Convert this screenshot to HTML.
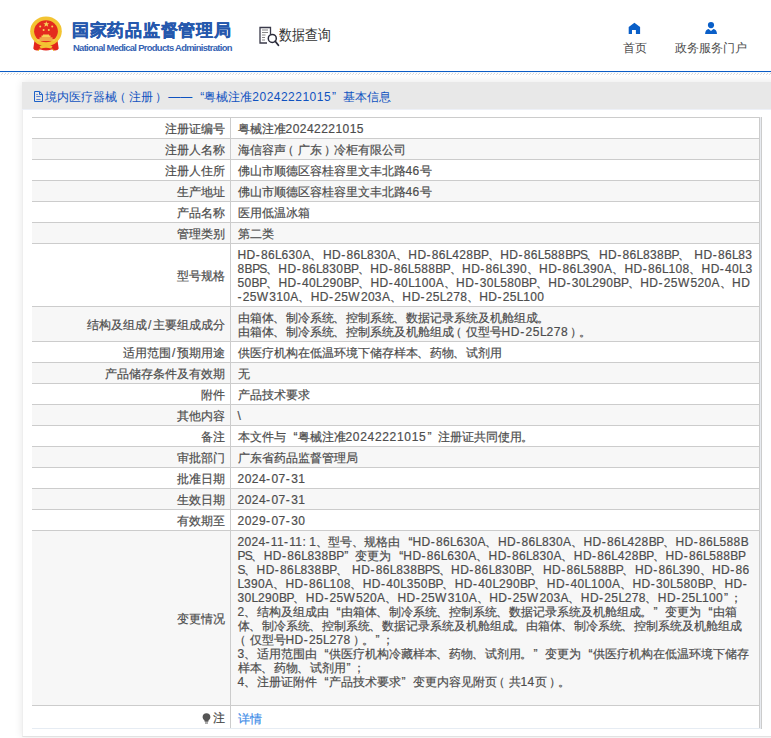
<!DOCTYPE html>
<html><head><meta charset="utf-8">
<style>
*{margin:0;padding:0;box-sizing:border-box}
html,body{width:771px;height:738px;overflow:hidden;background:#fff}
body{position:relative;font-family:"Liberation Sans",sans-serif;font-size:12px;color:#4d4d4d}
.abs{position:absolute}
#topline{left:0;top:71px;width:771px;height:1px;background:#0b5cc5}
#hatch{left:0;top:72px;width:771px;height:4px;background:repeating-linear-gradient(135deg,#fff 0,#fff 1.4px,#d8d8d8 1.4px,#d8d8d8 2.2px,#fff 2.2px,#fff 3px)}
#title{left:72px;top:19px;font-size:17px;letter-spacing:0.72px;font-weight:bold;color:#2558ad;-webkit-text-stroke:0.35px #2558ad;white-space:nowrap;line-height:24px}
#sub{left:73px;top:42px;font-size:9.4px;font-weight:bold;letter-spacing:-0.67px;color:#3462b2;white-space:nowrap;line-height:12px}
#sq{left:279px;top:24px;font-size:13px;color:#333;line-height:20px;white-space:nowrap;transform:scaleY(1.16);transform-origin:0 0}
.nav{top:41px;font-size:12px;color:#4a4a4a;line-height:14px;white-space:nowrap}
#box{left:22px;top:82px;width:760px;height:655px;background:#fff;box-shadow:0 0 8px rgba(0,0,0,.10);border-bottom:1px solid #e2e2e2;border-left:1px solid #eee}
#hbar{left:22px;top:82px;width:749px;height:27px;background:#e8e8e8;border-bottom:1px solid #edf0f7;height:28px}
#htext{left:45px;top:90px;line-height:14px;color:#0f52c0;white-space:nowrap}
.row{position:absolute;left:32px;width:727px;border-top:1px solid #ccc;-webkit-text-stroke:0.2px currentColor}
.row .l{position:absolute;left:0;top:0;bottom:0;width:198px;display:flex;align-items:center;justify-content:flex-end;padding:2px 5.5px 0 0;line-height:14px;white-space:nowrap}
.row .r{position:absolute;left:198px;top:0;bottom:0;right:0;border-left:1px solid #ccc;padding:4px 0 0 6.5px;line-height:14px;white-space:nowrap}
.ln{height:14px}
.ql,.qr{display:inline-block;width:12px}
.ql{text-align:right}
.qr{text-align:left;padding-left:1px}
.pl,.pr,.pd,.ps,.pc{position:relative}
.pl{left:-3.5px}.pr{left:2px}.pd{left:-1px}.ps{left:-5px}.pc{left:-0.5px}
.g{background:#f7f7f7}
#rb1{left:759px;top:117px;width:1px;height:612px;background:#ccc}
#rb2{left:760px;top:117px;width:1px;height:612px;background:#e8ebf0}
#rb3{left:761px;top:117px;width:1px;height:612px;background:#ccc}
#bb{left:32px;top:728px;width:729px;height:1px;background:#e6ecf3}
</style></head><body>
<div id="topline" class="abs"></div>
<svg class="abs" style="left:0;top:72px" width="771" height="4"><defs><pattern id="hp" width="3" height="4" patternUnits="userSpaceOnUse"><rect x="2" y="1" width="1" height="1" fill="#d6d6d6"/><rect x="1" y="2" width="1" height="1" fill="#dedede"/><rect x="0" y="0" width="3" height="1" fill="#f4f8fc"/></pattern></defs><rect width="771" height="4" fill="url(#hp)"/></svg>

<!-- emblem -->
<svg class="abs" style="left:28px;top:14px" width="36" height="40" viewBox="28 14 36 40">
  <path d="M34.5 40.5 L33.3 48.5 Q34 50.8 37.5 50.6 L40.5 49.5 Q46 51.5 51.5 49.5 L54.5 50.6 Q58 50.8 58.7 48.5 L57.5 40.5 Z" fill="#e3261b"/>
  <ellipse cx="46" cy="31.3" rx="15.8" ry="14.8" fill="#f3c432"/>
  <ellipse cx="46" cy="31.2" rx="11.9" ry="11" fill="#e42a1e"/>
  <path d="M37.2 39.2 H54.8 V40.8 H37.2Z M39.5 37.6 H52.5 V38.8 H39.5Z M41.5 35.6 H50.5 V37.3 H41.5Z M43 34.6 H49 V35.6 H43Z" fill="#f6d257"/>
  <path d="M39.5 46.5 Q42 44.2 46 45 Q50 44.2 52.5 46.5 L51 48.5 Q46 47.2 41 48.5Z" fill="#f3c432"/>
  <path d="M40 48.5 L38 51 M52 48.5 L54 51" stroke="#f3c432" stroke-width="1"/>
  <polygon points="46.3,21.2 47.1,23.3 49.3,23.3 47.6,24.6 48.2,26.7 46.3,25.4 44.4,26.7 45,24.6 43.3,23.3 45.5,23.3" fill="#f6d257"/>
  <circle cx="40.2" cy="26.5" r="1" fill="#f6d257"/>
  <circle cx="52.2" cy="26.5" r="1" fill="#f6d257"/>
  <circle cx="43.6" cy="30" r="1" fill="#f6d257"/>
  <circle cx="48.8" cy="30" r="1" fill="#f6d257"/>
</svg>
<div id="title" class="abs">国家药品监督管理局</div>
<div id="sub" class="abs">National Medical Products Administration</div>

<!-- search icon -->
<svg class="abs" style="left:258px;top:25px" width="22" height="22" viewBox="258 25 22 22">
  <path d="M270.5 34 V27.5 H260 V43 H267" fill="none" stroke="#3a3a4a" stroke-width="1.3"/>
  <path d="M262 30 H268 M262 32.5 H268 M262 35 H265.5 M262 37.5 H265 M262 40 H265" stroke="#888" stroke-width="1"/>
  <circle cx="272.3" cy="38.4" r="4" fill="#fff" stroke="#2a2a3a" stroke-width="1.5"/>
  <path d="M275.2 41.3 L278.4 45.2" stroke="#2a2a3a" stroke-width="1.8" stroke-linecap="round"/>
</svg>
<div id="sq" class="abs">数据查询</div>

<!-- nav -->
<svg class="abs" style="left:627px;top:22px" width="15" height="13" viewBox="627 22 15 13">
  <path d="M628.7 27.1 L634.4 22.8 L640.1 27.1 V34 H635.9 V29.9 H632 V34 H628.7 Z" fill="#0a5fc8"/>
</svg>
<div class="abs nav" style="left:623px">首页</div>
<svg class="abs" style="left:704px;top:21px" width="15" height="14" viewBox="704 21 15 14">
  <circle cx="711" cy="25.1" r="3.1" fill="#0a5fc8"/>
  <path d="M705.1 34 Q705.3 29.4 708.6 28.9 L711 30.9 L713.4 28.9 Q716.8 29.4 717 34 Z" fill="#0a5fc8"/>
</svg>
<div class="abs nav" style="left:675px">政务服务门户</div>

<!-- container -->
<div id="box" class="abs"></div>
<div id="hbar" class="abs"></div>
<svg class="abs" style="left:33px;top:90px" width="11" height="13" viewBox="33 90 11 13">
  <path d="M34.5 91.5 H39.7 L42.5 94.3 V101.5 H34.5 Z" fill="none" stroke="#1d62c9" stroke-width="1"/>
  <path d="M39.5 91.8 V94.5 H42.2" fill="none" stroke="#1d62c9" stroke-width="1"/>
  <path d="M36.3 94.5 H37.8 M36.3 96.5 H40.5 M36.3 99.5 H40.5" stroke="#5a7fcf" stroke-width="1"/>
</svg>
<div id="htext" class="abs">境内医疗器械<span class="pl">（</span>注册<span class="pr">）</span> ——<span class="ql">“</span>粤械注准<span style="letter-spacing:0.48px">20242221015</span><span class="qr">”</span>基本信息</div>

<div id="rows">
<div class="row" style="top:117px;height:21px"><div class="l">注册证编号</div><div class="r"><div class="ln">粤械注准<span style="letter-spacing:0.457px">20242221015</span></div></div></div>
<div class="row g" style="top:138px;height:21px"><div class="l">注册人名称</div><div class="r"><div class="ln">海信容声<span class="pl">（</span>广东<span class="pr">）</span>冷柜有限公司</div></div></div>
<div class="row" style="top:159px;height:21px"><div class="l">注册人住所</div><div class="r"><div class="ln">佛山市顺德区容桂容里文丰北路<span style="letter-spacing:0.33px">46</span>号</div></div></div>
<div class="row g" style="top:180px;height:21px"><div class="l">生产地址</div><div class="r"><div class="ln">佛山市顺德区容桂容里文丰北路<span style="letter-spacing:0.33px">46</span>号</div></div></div>
<div class="row" style="top:201px;height:21px"><div class="l">产品名称</div><div class="r"><div class="ln">医用低温冰箱</div></div></div>
<div class="row g" style="top:222px;height:21px"><div class="l">管理类别</div><div class="r"><div class="ln">第二类</div></div></div>
<div class="row" style="top:243px;height:63px"><div class="l">型号规格</div><div class="r"><div class="ln"><span style="letter-spacing:0.426px">H</span><span style="letter-spacing:0.526px">D</span><span style="letter-spacing:1.246px">-</span><span style="letter-spacing:0.326px">86</span><span style="letter-spacing:-0.224px">L</span><span style="letter-spacing:0.326px">630</span><span style="letter-spacing:0.396px">A</span><span class="pc">、</span><span style="letter-spacing:0.426px">H</span><span style="letter-spacing:0.526px">D</span><span style="letter-spacing:1.246px">-</span><span style="letter-spacing:0.326px">86</span><span style="letter-spacing:-0.224px">L</span><span style="letter-spacing:0.326px">830</span><span style="letter-spacing:0.396px">A</span><span class="pc">、</span><span style="letter-spacing:0.426px">H</span><span style="letter-spacing:0.526px">D</span><span style="letter-spacing:1.246px">-</span><span style="letter-spacing:0.326px">86</span><span style="letter-spacing:-0.224px">L</span><span style="letter-spacing:0.326px">428</span><span style="letter-spacing:-0.404px">B</span><span style="letter-spacing:-0.804px">P</span><span class="pc">、</span><span style="letter-spacing:0.426px">H</span><span style="letter-spacing:0.526px">D</span><span style="letter-spacing:1.246px">-</span><span style="letter-spacing:0.326px">86</span><span style="letter-spacing:-0.224px">L</span><span style="letter-spacing:0.326px">588</span><span style="letter-spacing:-0.404px">B</span><span style="letter-spacing:-0.804px">P</span><span style="letter-spacing:-1.004px">S</span><span class="pc">、</span><span style="letter-spacing:0.426px">H</span><span style="letter-spacing:0.526px">D</span><span style="letter-spacing:1.246px">-</span><span style="letter-spacing:0.326px">86</span><span style="letter-spacing:-0.224px">L</span><span style="letter-spacing:0.326px">838</span><span style="letter-spacing:-0.404px">B</span><span style="letter-spacing:-0.804px">P</span><span class="pc">、</span><span style="letter-spacing:0.266px"> </span><span style="letter-spacing:0.426px">H</span><span style="letter-spacing:0.526px">D</span><span style="letter-spacing:1.246px">-</span><span style="letter-spacing:0.326px">86</span><span style="letter-spacing:-0.224px">L</span><span style="letter-spacing:0.326px">83</span></div><div class="ln"><span style="letter-spacing:0.327px">8</span><span style="letter-spacing:-0.403px">B</span><span style="letter-spacing:-0.803px">P</span><span style="letter-spacing:-1.003px">S</span><span class="pc">、</span><span style="letter-spacing:0.427px">H</span><span style="letter-spacing:0.527px">D</span><span style="letter-spacing:1.247px">-</span><span style="letter-spacing:0.327px">86</span><span style="letter-spacing:-0.223px">L</span><span style="letter-spacing:0.327px">830</span><span style="letter-spacing:-0.403px">B</span><span style="letter-spacing:-0.803px">P</span><span class="pc">、</span><span style="letter-spacing:0.427px">H</span><span style="letter-spacing:0.527px">D</span><span style="letter-spacing:1.247px">-</span><span style="letter-spacing:0.327px">86</span><span style="letter-spacing:-0.223px">L</span><span style="letter-spacing:0.327px">588</span><span style="letter-spacing:-0.403px">B</span><span style="letter-spacing:-0.803px">P</span><span class="pc">、</span><span style="letter-spacing:0.427px">H</span><span style="letter-spacing:0.527px">D</span><span style="letter-spacing:1.247px">-</span><span style="letter-spacing:0.327px">86</span><span style="letter-spacing:-0.223px">L</span><span style="letter-spacing:0.327px">390</span><span class="pc">、</span><span style="letter-spacing:0.427px">H</span><span style="letter-spacing:0.527px">D</span><span style="letter-spacing:1.247px">-</span><span style="letter-spacing:0.327px">86</span><span style="letter-spacing:-0.223px">L</span><span style="letter-spacing:0.327px">390</span><span style="letter-spacing:0.397px">A</span><span class="pc">、</span><span style="letter-spacing:0.427px">H</span><span style="letter-spacing:0.527px">D</span><span style="letter-spacing:1.247px">-</span><span style="letter-spacing:0.327px">86</span><span style="letter-spacing:-0.223px">L</span><span style="letter-spacing:0.327px">108</span><span class="pc">、</span><span style="letter-spacing:0.427px">H</span><span style="letter-spacing:0.527px">D</span><span style="letter-spacing:1.247px">-</span><span style="letter-spacing:0.327px">40</span><span style="letter-spacing:-0.223px">L</span><span style="letter-spacing:0.327px">3</span></div><div class="ln"><span style="letter-spacing:0.346px">50</span><span style="letter-spacing:-0.384px">B</span><span style="letter-spacing:-0.784px">P</span><span class="pc">、</span><span style="letter-spacing:0.446px">H</span><span style="letter-spacing:0.546px">D</span><span style="letter-spacing:1.266px">-</span><span style="letter-spacing:0.346px">40</span><span style="letter-spacing:-0.204px">L</span><span style="letter-spacing:0.346px">290</span><span style="letter-spacing:-0.384px">B</span><span style="letter-spacing:-0.784px">P</span><span class="pc">、</span><span style="letter-spacing:0.446px">H</span><span style="letter-spacing:0.546px">D</span><span style="letter-spacing:1.266px">-</span><span style="letter-spacing:0.346px">40</span><span style="letter-spacing:-0.204px">L</span><span style="letter-spacing:0.346px">100</span><span style="letter-spacing:0.416px">A</span><span class="pc">、</span><span style="letter-spacing:0.446px">H</span><span style="letter-spacing:0.546px">D</span><span style="letter-spacing:1.266px">-</span><span style="letter-spacing:0.346px">30</span><span style="letter-spacing:-0.204px">L</span><span style="letter-spacing:0.346px">580</span><span style="letter-spacing:-0.384px">B</span><span style="letter-spacing:-0.784px">P</span><span class="pc">、</span><span style="letter-spacing:0.446px">H</span><span style="letter-spacing:0.546px">D</span><span style="letter-spacing:1.266px">-</span><span style="letter-spacing:0.346px">30</span><span style="letter-spacing:-0.204px">L</span><span style="letter-spacing:0.346px">290</span><span style="letter-spacing:-0.384px">B</span><span style="letter-spacing:-0.784px">P</span><span class="pc">、</span><span style="letter-spacing:0.446px">H</span><span style="letter-spacing:0.546px">D</span><span style="letter-spacing:1.266px">-</span><span style="letter-spacing:0.346px">25</span><span style="letter-spacing:1.336px">W</span><span style="letter-spacing:0.346px">520</span><span style="letter-spacing:0.416px">A</span><span class="pc">、</span><span style="letter-spacing:0.446px">H</span><span style="letter-spacing:0.546px">D</span></div><div class="ln"><span style="letter-spacing:1.238px">-</span><span style="letter-spacing:0.318px">25</span><span style="letter-spacing:1.308px">W</span><span style="letter-spacing:0.318px">310</span><span style="letter-spacing:0.388px">A</span><span class="pc">、</span><span style="letter-spacing:0.418px">H</span><span style="letter-spacing:0.518px">D</span><span style="letter-spacing:1.238px">-</span><span style="letter-spacing:0.318px">25</span><span style="letter-spacing:1.308px">W</span><span style="letter-spacing:0.318px">203</span><span style="letter-spacing:0.388px">A</span><span class="pc">、</span><span style="letter-spacing:0.418px">H</span><span style="letter-spacing:0.518px">D</span><span style="letter-spacing:1.238px">-</span><span style="letter-spacing:0.318px">25</span><span style="letter-spacing:-0.232px">L</span><span style="letter-spacing:0.318px">278</span><span class="pc">、</span><span style="letter-spacing:0.418px">H</span><span style="letter-spacing:0.518px">D</span><span style="letter-spacing:1.238px">-</span><span style="letter-spacing:0.318px">25</span><span style="letter-spacing:-0.232px">L</span><span style="letter-spacing:0.318px">100</span></div></div></div>
<div class="row g" style="top:306px;height:35px"><div class="l">结构及组成<span style="margin:0 1.1px">/</span>主要组成成分</div><div class="r"><div class="ln">由箱体<span class="pc">、</span>制冷系统<span class="pc">、</span>控制系统<span class="pc">、</span>数据记录系统及机舱组成<span class="pd">。</span></div><div class="ln">由箱体<span class="pc">、</span>制冷系统<span class="pc">、</span>控制系统及机舱组成<span class="pl">（</span>仅型号<span style="letter-spacing:0.608px">H</span><span style="letter-spacing:0.708px">D</span><span style="letter-spacing:1.428px">-</span><span style="letter-spacing:0.508px">25</span><span style="letter-spacing:-0.042px">L</span><span style="letter-spacing:0.508px">278</span><span class="pr">）</span><span class="pd">。</span></div></div></div>
<div class="row" style="top:341px;height:21px"><div class="l">适用范围<span style="margin:0 1.1px">/</span>预期用途</div><div class="r"><div class="ln">供医疗机构在低温环境下储存样本<span class="pc">、</span>药物<span class="pc">、</span>试剂用</div></div></div>
<div class="row g" style="top:362px;height:21px"><div class="l">产品储存条件及有效期</div><div class="r"><div class="ln">无</div></div></div>
<div class="row" style="top:383px;height:21px"><div class="l">附件</div><div class="r"><div class="ln">产品技术要求</div></div></div>
<div class="row g" style="top:404px;height:21px"><div class="l">其他内容</div><div class="r"><div class="ln"><span style="letter-spacing:0.2px">&#92;</span></div></div></div>
<div class="row" style="top:425px;height:21px"><div class="l">备注</div><div class="r"><div class="ln">本文件与<span class="ql">“</span>粤械注准<span style="letter-spacing:0.679px">20242221015</span><span class="qr">”</span>注册证共同使用<span class="pd">。</span></div></div></div>
<div class="row g" style="top:446px;height:21px"><div class="l">审批部门</div><div class="r"><div class="ln">广东省药品监督管理局</div></div></div>
<div class="row" style="top:467px;height:21px"><div class="l">批准日期</div><div class="r"><div class="ln"><span style="letter-spacing:0.47px">2024</span><span style="letter-spacing:1.39px">-</span><span style="letter-spacing:0.47px">07</span><span style="letter-spacing:1.39px">-</span><span style="letter-spacing:0.47px">31</span></div></div></div>
<div class="row g" style="top:488px;height:21px"><div class="l">生效日期</div><div class="r"><div class="ln"><span style="letter-spacing:0.47px">2024</span><span style="letter-spacing:1.39px">-</span><span style="letter-spacing:0.47px">07</span><span style="letter-spacing:1.39px">-</span><span style="letter-spacing:0.47px">31</span></div></div></div>
<div class="row" style="top:509px;height:21px"><div class="l">有效期至</div><div class="r"><div class="ln"><span style="letter-spacing:0.47px">2029</span><span style="letter-spacing:1.39px">-</span><span style="letter-spacing:0.47px">07</span><span style="letter-spacing:1.39px">-</span><span style="letter-spacing:0.47px">30</span></div></div></div>
<div class="row g" style="top:530px;height:175px"><div class="l">变更情况</div><div class="r"><div class="ln"><span style="letter-spacing:0.341px">2024</span><span style="letter-spacing:1.261px">-</span><span style="letter-spacing:0.341px">11</span><span style="letter-spacing:1.261px">-</span><span style="letter-spacing:0.341px">11</span><span style="letter-spacing:0.011px">:</span><span style="letter-spacing:0.281px"> </span><span style="letter-spacing:0.341px">1</span><span class="pc">、</span>型号<span class="pc">、</span>规格由<span class="ql">“</span><span style="letter-spacing:0.441px">H</span><span style="letter-spacing:0.541px">D</span><span style="letter-spacing:1.261px">-</span><span style="letter-spacing:0.341px">86</span><span style="letter-spacing:-0.209px">L</span><span style="letter-spacing:0.341px">630</span><span style="letter-spacing:0.411px">A</span><span class="pc">、</span><span style="letter-spacing:0.441px">H</span><span style="letter-spacing:0.541px">D</span><span style="letter-spacing:1.261px">-</span><span style="letter-spacing:0.341px">86</span><span style="letter-spacing:-0.209px">L</span><span style="letter-spacing:0.341px">830</span><span style="letter-spacing:0.411px">A</span><span class="pc">、</span><span style="letter-spacing:0.441px">H</span><span style="letter-spacing:0.541px">D</span><span style="letter-spacing:1.261px">-</span><span style="letter-spacing:0.341px">86</span><span style="letter-spacing:-0.209px">L</span><span style="letter-spacing:0.341px">428</span><span style="letter-spacing:-0.389px">B</span><span style="letter-spacing:-0.789px">P</span><span class="pc">、</span><span style="letter-spacing:0.441px">H</span><span style="letter-spacing:0.541px">D</span><span style="letter-spacing:1.261px">-</span><span style="letter-spacing:0.341px">86</span><span style="letter-spacing:-0.209px">L</span><span style="letter-spacing:0.341px">588</span><span style="letter-spacing:-0.389px">B</span></div><div class="ln"><span style="letter-spacing:-0.822px">P</span><span style="letter-spacing:-1.022px">S</span><span class="pc">、</span><span style="letter-spacing:0.408px">H</span><span style="letter-spacing:0.508px">D</span><span style="letter-spacing:1.228px">-</span><span style="letter-spacing:0.308px">86</span><span style="letter-spacing:-0.242px">L</span><span style="letter-spacing:0.308px">838</span><span style="letter-spacing:-0.422px">B</span><span style="letter-spacing:-0.822px">P</span><span class="qr">”</span>变更为<span class="ql">“</span><span style="letter-spacing:0.408px">H</span><span style="letter-spacing:0.508px">D</span><span style="letter-spacing:1.228px">-</span><span style="letter-spacing:0.308px">86</span><span style="letter-spacing:-0.242px">L</span><span style="letter-spacing:0.308px">630</span><span style="letter-spacing:0.378px">A</span><span class="pc">、</span><span style="letter-spacing:0.408px">H</span><span style="letter-spacing:0.508px">D</span><span style="letter-spacing:1.228px">-</span><span style="letter-spacing:0.308px">86</span><span style="letter-spacing:-0.242px">L</span><span style="letter-spacing:0.308px">830</span><span style="letter-spacing:0.378px">A</span><span class="pc">、</span><span style="letter-spacing:0.408px">H</span><span style="letter-spacing:0.508px">D</span><span style="letter-spacing:1.228px">-</span><span style="letter-spacing:0.308px">86</span><span style="letter-spacing:-0.242px">L</span><span style="letter-spacing:0.308px">428</span><span style="letter-spacing:-0.422px">B</span><span style="letter-spacing:-0.822px">P</span><span class="pc">、</span><span style="letter-spacing:0.408px">H</span><span style="letter-spacing:0.508px">D</span><span style="letter-spacing:1.228px">-</span><span style="letter-spacing:0.308px">86</span><span style="letter-spacing:-0.242px">L</span><span style="letter-spacing:0.308px">588</span><span style="letter-spacing:-0.422px">B</span><span style="letter-spacing:-0.822px">P</span></div><div class="ln"><span style="letter-spacing:-0.996px">S</span><span class="pc">、</span><span style="letter-spacing:0.434px">H</span><span style="letter-spacing:0.534px">D</span><span style="letter-spacing:1.254px">-</span><span style="letter-spacing:0.334px">86</span><span style="letter-spacing:-0.216px">L</span><span style="letter-spacing:0.334px">838</span><span style="letter-spacing:-0.396px">B</span><span style="letter-spacing:-0.796px">P</span><span class="pc">、</span><span style="letter-spacing:0.274px"> </span><span style="letter-spacing:0.434px">H</span><span style="letter-spacing:0.534px">D</span><span style="letter-spacing:1.254px">-</span><span style="letter-spacing:0.334px">86</span><span style="letter-spacing:-0.216px">L</span><span style="letter-spacing:0.334px">838</span><span style="letter-spacing:-0.396px">B</span><span style="letter-spacing:-0.796px">P</span><span style="letter-spacing:-0.996px">S</span><span class="pc">、</span><span style="letter-spacing:0.434px">H</span><span style="letter-spacing:0.534px">D</span><span style="letter-spacing:1.254px">-</span><span style="letter-spacing:0.334px">86</span><span style="letter-spacing:-0.216px">L</span><span style="letter-spacing:0.334px">830</span><span style="letter-spacing:-0.396px">B</span><span style="letter-spacing:-0.796px">P</span><span class="pc">、</span><span style="letter-spacing:0.434px">H</span><span style="letter-spacing:0.534px">D</span><span style="letter-spacing:1.254px">-</span><span style="letter-spacing:0.334px">86</span><span style="letter-spacing:-0.216px">L</span><span style="letter-spacing:0.334px">588</span><span style="letter-spacing:-0.396px">B</span><span style="letter-spacing:-0.796px">P</span><span class="pc">、</span><span style="letter-spacing:0.434px">H</span><span style="letter-spacing:0.534px">D</span><span style="letter-spacing:1.254px">-</span><span style="letter-spacing:0.334px">86</span><span style="letter-spacing:-0.216px">L</span><span style="letter-spacing:0.334px">390</span><span class="pc">、</span><span style="letter-spacing:0.434px">H</span><span style="letter-spacing:0.534px">D</span><span style="letter-spacing:1.254px">-</span><span style="letter-spacing:0.334px">86</span></div><div class="ln"><span style="letter-spacing:-0.203px">L</span><span style="letter-spacing:0.347px">390</span><span style="letter-spacing:0.417px">A</span><span class="pc">、</span><span style="letter-spacing:0.447px">H</span><span style="letter-spacing:0.547px">D</span><span style="letter-spacing:1.267px">-</span><span style="letter-spacing:0.347px">86</span><span style="letter-spacing:-0.203px">L</span><span style="letter-spacing:0.347px">108</span><span class="pc">、</span><span style="letter-spacing:0.447px">H</span><span style="letter-spacing:0.547px">D</span><span style="letter-spacing:1.267px">-</span><span style="letter-spacing:0.347px">40</span><span style="letter-spacing:-0.203px">L</span><span style="letter-spacing:0.347px">350</span><span style="letter-spacing:-0.383px">B</span><span style="letter-spacing:-0.783px">P</span><span class="pc">、</span><span style="letter-spacing:0.447px">H</span><span style="letter-spacing:0.547px">D</span><span style="letter-spacing:1.267px">-</span><span style="letter-spacing:0.347px">40</span><span style="letter-spacing:-0.203px">L</span><span style="letter-spacing:0.347px">290</span><span style="letter-spacing:-0.383px">B</span><span style="letter-spacing:-0.783px">P</span><span class="pc">、</span><span style="letter-spacing:0.447px">H</span><span style="letter-spacing:0.547px">D</span><span style="letter-spacing:1.267px">-</span><span style="letter-spacing:0.347px">40</span><span style="letter-spacing:-0.203px">L</span><span style="letter-spacing:0.347px">100</span><span style="letter-spacing:0.417px">A</span><span class="pc">、</span><span style="letter-spacing:0.447px">H</span><span style="letter-spacing:0.547px">D</span><span style="letter-spacing:1.267px">-</span><span style="letter-spacing:0.347px">30</span><span style="letter-spacing:-0.203px">L</span><span style="letter-spacing:0.347px">580</span><span style="letter-spacing:-0.383px">B</span><span style="letter-spacing:-0.783px">P</span><span class="pc">、</span><span style="letter-spacing:0.447px">H</span><span style="letter-spacing:0.547px">D</span><span style="letter-spacing:1.267px">-</span></div><div class="ln"><span style="letter-spacing:0.33px">30</span><span style="letter-spacing:-0.22px">L</span><span style="letter-spacing:0.33px">290</span><span style="letter-spacing:-0.4px">B</span><span style="letter-spacing:-0.8px">P</span><span class="pc">、</span><span style="letter-spacing:0.43px">H</span><span style="letter-spacing:0.53px">D</span><span style="letter-spacing:1.25px">-</span><span style="letter-spacing:0.33px">25</span><span style="letter-spacing:1.32px">W</span><span style="letter-spacing:0.33px">520</span><span style="letter-spacing:0.4px">A</span><span class="pc">、</span><span style="letter-spacing:0.43px">H</span><span style="letter-spacing:0.53px">D</span><span style="letter-spacing:1.25px">-</span><span style="letter-spacing:0.33px">25</span><span style="letter-spacing:1.32px">W</span><span style="letter-spacing:0.33px">310</span><span style="letter-spacing:0.4px">A</span><span class="pc">、</span><span style="letter-spacing:0.43px">H</span><span style="letter-spacing:0.53px">D</span><span style="letter-spacing:1.25px">-</span><span style="letter-spacing:0.33px">25</span><span style="letter-spacing:1.32px">W</span><span style="letter-spacing:0.33px">203</span><span style="letter-spacing:0.4px">A</span><span class="pc">、</span><span style="letter-spacing:0.43px">H</span><span style="letter-spacing:0.53px">D</span><span style="letter-spacing:1.25px">-</span><span style="letter-spacing:0.33px">25</span><span style="letter-spacing:-0.22px">L</span><span style="letter-spacing:0.33px">278</span><span class="pc">、</span><span style="letter-spacing:0.43px">H</span><span style="letter-spacing:0.53px">D</span><span style="letter-spacing:1.25px">-</span><span style="letter-spacing:0.33px">25</span><span style="letter-spacing:-0.22px">L</span><span style="letter-spacing:0.33px">100</span><span class="qr">”</span><span class="ps">；</span></div><div class="ln"><span style="letter-spacing:0.33px">2</span><span class="pc">、</span>结构及组成由<span class="ql">“</span>由箱体<span class="pc">、</span>制冷系统<span class="pc">、</span>控制系统<span class="pc">、</span>数据记录系统及机舱组成<span class="pd">。</span><span class="qr">”</span>变更为<span class="ql">“</span>由箱</div><div class="ln">体<span class="pc">、</span>制冷系统<span class="pc">、</span>控制系统<span class="pc">、</span>数据记录系统及机舱组成<span class="pd">。</span>由箱体<span class="pc">、</span>制冷系统<span class="pc">、</span>控制系统及机舱组成</div><div class="ln"><span class="pl">（</span>仅型号<span style="letter-spacing:0.43px">H</span><span style="letter-spacing:0.53px">D</span><span style="letter-spacing:1.25px">-</span><span style="letter-spacing:0.33px">25</span><span style="letter-spacing:-0.22px">L</span><span style="letter-spacing:0.33px">278</span><span class="pr">）</span><span class="pd">。</span><span class="qr">”</span><span class="ps">；</span></div><div class="ln"><span style="letter-spacing:0.33px">3</span><span class="pc">、</span>适用范围由<span class="ql">“</span>供医疗机构冷藏样本<span class="pc">、</span>药物<span class="pc">、</span>试剂用<span class="pd">。</span><span class="qr">”</span>变更为<span class="ql">“</span>供医疗机构在低温环境下储存</div><div class="ln">样本<span class="pc">、</span>药物<span class="pc">、</span>试剂用<span class="qr">”</span><span class="ps">；</span></div><div class="ln"><span style="letter-spacing:0.33px">4</span><span class="pc">、</span>注册证附件<span class="ql">“</span>产品技术要求<span class="qr">”</span>变更内容见附页<span class="pl">（</span>共<span style="letter-spacing:0.33px">14</span>页<span class="pr">）</span><span class="pd">。</span></div><div class="ln">&nbsp;</div></div></div>
<div class="row last" style="top:705px;height:23px"><div class="l"><svg style="display:inline-block;vertical-align:-1px;margin-right:2px" width="9" height="11" viewBox="0 0 9 11"><path d="M4.5 0.3 C2.1 0.3 0.6 2 0.6 4.1 C0.6 5.6 1.5 6.6 2.5 7.4 L2.7 8.7 H6.3 L6.5 7.4 C7.5 6.6 8.4 5.6 8.4 4.1 C8.4 2 6.9 0.3 4.5 0.3Z" fill="#555"/><rect x="3" y="9.4" width="3" height="1.2" fill="#777"/></svg>注</div><div class="r"><div class="ln" style="color:#3d8de8;padding-top:2px">详情</div></div></div>
</div>
<div id="rb1" class="abs"></div><div id="rb2" class="abs"></div><div id="rb3" class="abs"></div>
<div id="bb" class="abs"></div>
</body></html>
